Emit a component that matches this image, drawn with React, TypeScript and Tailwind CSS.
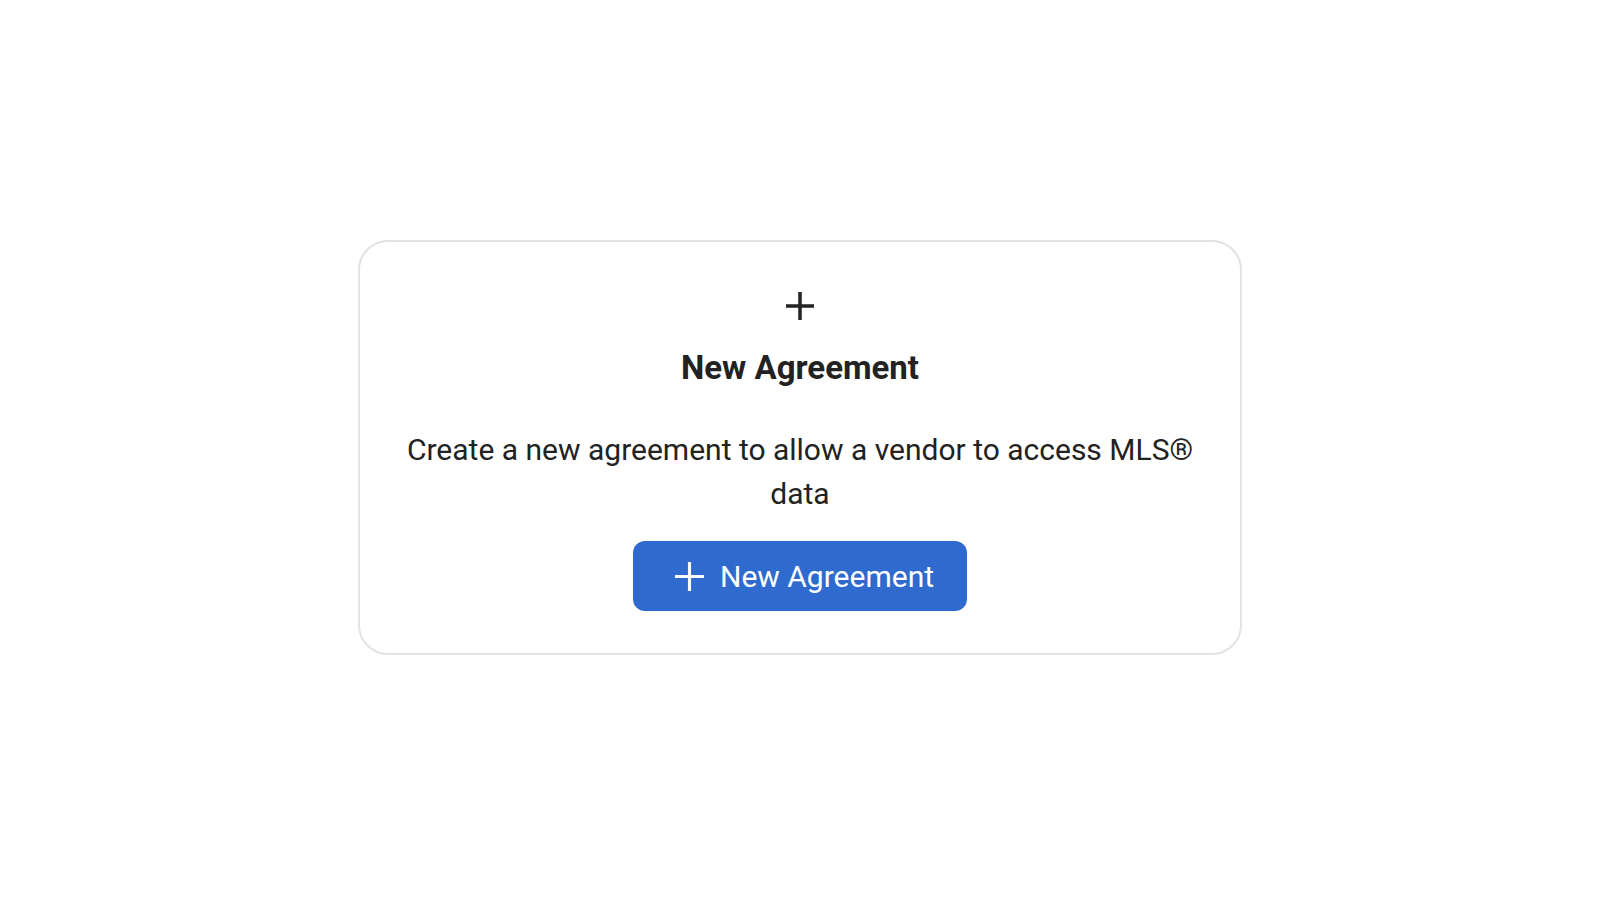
import React from 'react';

// Plus glyph used for the card header and the button
const PlusIcon: React.FC<{ className?: string; stroke?: number }> = ({ className, stroke = 3.5 }) => (
  <svg viewBox="0 0 28 28" fill="none" stroke="currentColor" strokeWidth={stroke} className={className}>
    <path d="M14 0v28M0 14h28" />
  </svg>
);

export default function App() {
  return (
    <div className="min-h-screen w-full bg-white flex justify-center items-start pt-[240px]" style={{ fontFamily: 'Roboto, "Liberation Sans", sans-serif' }}>
      <div className="w-[884px] border-2 border-[#e2e2e2] rounded-[30px] flex flex-col items-center pt-[50px] pb-[42px] text-[#222222]">
        {/* Header */}
        <PlusIcon className="w-[28px] h-[28px] text-[#222222]" />
        <h2 className="mt-[28px] text-[33px] font-bold leading-[40px]">New Agreement</h2>

        {/* Description */}
        <p className="mt-[40px] text-[30px] leading-[44px] text-center max-w-[800px]">
          Create a new agreement to allow a vendor to access MLS® data
        </p>

        {/* Action */}
        <button className="mt-[25px] h-[70px] w-[334px] rounded-[12px] bg-[#2f6bcf] text-white flex items-center pl-[42px] gap-[16px] text-[30px]">
          <PlusIcon className="w-[29px] h-[29px]" stroke={3} />
          <span>New Agreement</span>
        </button>
      </div>
    </div>
  );
}
